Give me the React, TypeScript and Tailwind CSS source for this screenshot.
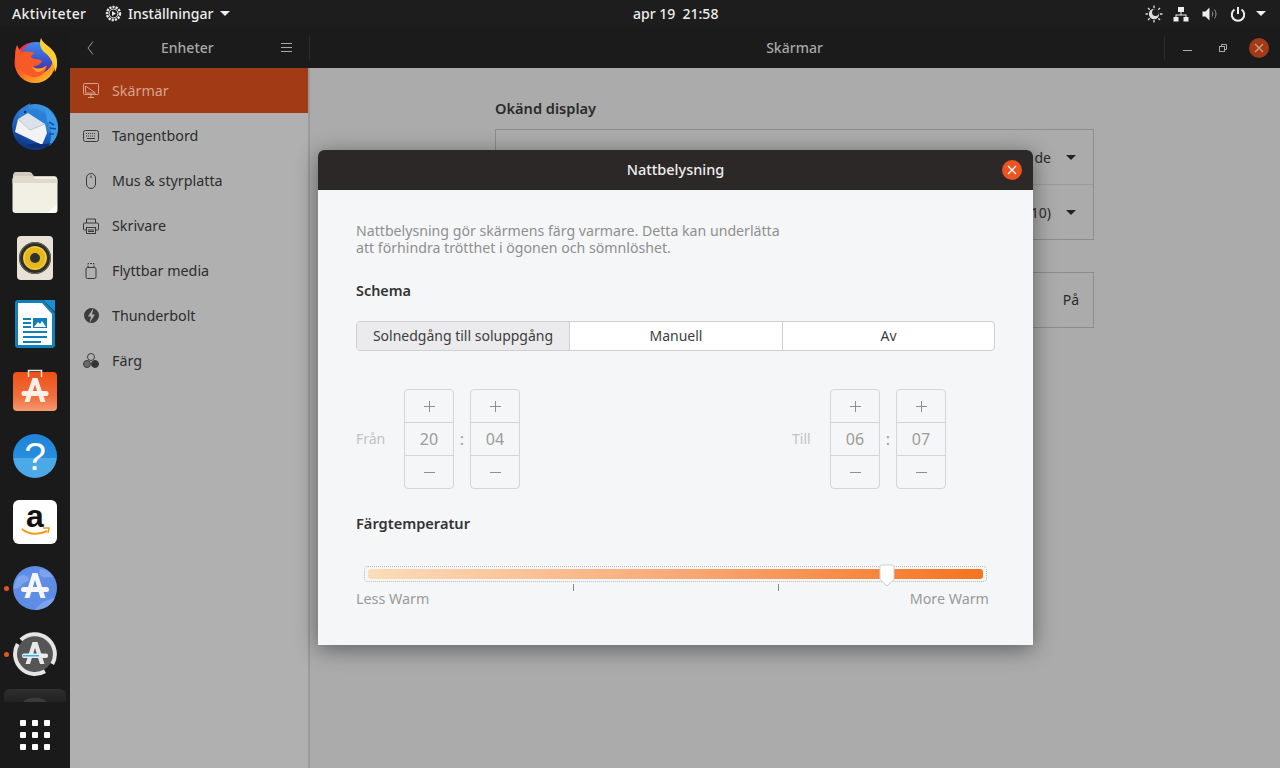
import type { ReactNode } from "react";

const FONT = "font-['Noto_Sans','Open_Sans',sans-serif]";

function Firefox() {
  return (
    <svg width="44" height="45" viewBox="0 0 44 45">
      <defs>
        <linearGradient id="ffOuter" x1="0.1" y1="0.1" x2="0.7" y2="1">
          <stop offset="0" stopColor="#f0264f" />
          <stop offset="0.55" stopColor="#ff6a1f" />
          <stop offset="1" stopColor="#ffb52a" />
        </linearGradient>
        <linearGradient id="ffBlue" x1="0.5" y1="0" x2="0.5" y2="1">
          <stop offset="0" stopColor="#3f8df0" />
          <stop offset="0.6" stopColor="#3a4fc8" />
          <stop offset="1" stopColor="#4a2aa0" />
        </linearGradient>
      </defs>
      <circle cx="22" cy="24.500" r="20.500" fill="url(#ffOuter)" />
      <circle cx="24" cy="20" r="16" fill="url(#ffBlue)" />
      <path d="M28 0C30 6 37 8 41 14C45 20 45 29 42 34C41 25 37 18 31 14C27 10 26 5 28 0Z" fill="#ffcf2e" />
      <path d="M4 7L8 15C11 13 17 13 22 15C20 16 18 17 18 19C20 22 25 20 29 23C27 27 24 28 20 28C24 32 30 31 34 27C33 35 27 40 20 39C10 37 3 29 2 21C2 16 2 11 4 7Z" fill="#f75a26" />
      <path d="M19 28.500C23 32 29 31 33 28C32 32 28 34 24 34C22 33 20 31 19 28.500Z" fill="#ffa62a" />
    </svg>
  );
}

function Thunderbird() {
  return (
    <svg width="48" height="48" viewBox="0 0 48 48">
      <defs>
        <linearGradient id="tbBlue" x1="0.7" y1="0" x2="0.3" y2="1">
          <stop offset="0" stopColor="#3d9be6" />
          <stop offset="0.6" stopColor="#1a5fbe" />
          <stop offset="1" stopColor="#0d2f78" />
        </linearGradient>
      </defs>
      <circle cx="24" cy="25" r="23" fill="url(#tbBlue)" />
      <path d="M8 15C9 8 14 3 20 1C17 4 17 6 18 8C25 6 33 9 37 15C41 20 42 26 38 32L33 22Z" fill="#2a7fd6" />
      <path d="M34 6C42 10 47 18 47 27C47 34 43 40 38 44C41 36 41 27 36 19Z" fill="#3d9be6" />
      <path d="M38 20l5 3M39 26l6 1M38 32l5 0" stroke="#144f9f" strokeWidth="1.500" />
      <path d="M7 17L17 11L34 22L19 29Z" fill="#dde1ea" />
      <path d="M7 17L19 28L34 22L36 31L31 43L4 30Z" fill="#f3f3f5" />
      <path d="M7 17L19 28L34 22" fill="none" stroke="#b9bec9" strokeWidth="0.800" />
      <circle cx="14" cy="10" r="1.200" fill="#0c2a5c" />
      <path d="M14 43C24 48 34 47 41 41C35 42 30 43 27 41Z" fill="#0d2f78" />
    </svg>
  );
}

function Folder() {
  return (
    <svg width="46" height="42" viewBox="0 0 46 42">
      <path d="M1 5c0-2 1-4 3-4h13c2 0 3 1 4 3l1 1h20c2 0 3 1 3 3v8H1z" fill="#d1cbbd" />
      <rect x="0.500" y="6" width="45" height="36" rx="3" fill="#f2efe4" />
      <path d="M0.500 9c0-3 1-4 3-4h17l3 3h19c2 0 3 1 3 3v1H0.500z" fill="#dfdacb" />
      <path d="M45 33v6c0 2-1 3-3 3h-7z" fill="#fbfaf5" />
    </svg>
  );
}

function Rhythmbox() {
  return (
    <svg width="36" height="44" viewBox="0 0 36 44">
      <rect x="0" y="0" width="36" height="44" rx="4" fill="#e7e2d5" />
      <circle cx="18" cy="22" r="16" fill="#2f2e2c" />
      <circle cx="18" cy="22" r="15.500" fill="none" stroke="#6e6c68" strokeWidth="1" />
      <circle cx="18" cy="22" r="12" fill="#e6b81f" />
      <circle cx="18" cy="22" r="11" fill="none" stroke="#f4d345" strokeWidth="1" />
      <circle cx="18" cy="22" r="5" fill="#33312d" />
    </svg>
  );
}

function Writer() {
  return (
    <svg width="40" height="48" viewBox="0 0 40 48">
      <path d="M3 0h25l12 13v32c0 2-1 3-3 3H3c-2 0-3-1-3-3V3c0-2 1-3 3-3z" fill="#1180b8" />
      <path d="M3 3h24l10 11v31H3z" fill="#fff" />
      <path d="M28 0h12v12z" fill="#1b8fd0" />
      <path d="M8 18h8v2H8zM8 22h8v2H8zM8 26h8v2H8zM8 31h24v2H8zM8 36h24v2H8zM8 41h18v2H8z" fill="#1180b8" />
      <rect x="18" y="18" width="14" height="10" fill="#1180b8" />
      <path d="M19 27l4-5 2 2 2-3 4 6z" fill="#fff" />
    </svg>
  );
}

function Software() {
  return (
    <svg width="44" height="42" viewBox="0 0 44 42">
      <defs>
        <linearGradient id="swBg" x1="0" y1="0" x2="0" y2="1">
          <stop offset="0" stopColor="#ee5017" />
          <stop offset="0.65" stopColor="#f0703f" />
          <stop offset="1" stopColor="#f59a72" />
        </linearGradient>
      </defs>
      <rect x="0" y="3" width="44" height="39" rx="4" fill="url(#swBg)" />
      <path d="M15.500 8V1.500h13V8" fill="none" stroke="#f3e6dc" strokeWidth="1.500" />
      <path d="M11.500 33L19.500 9h5L32.500 33h-5L22 15.500 16.500 33z" fill="#fdf0ea" />
      <rect x="8.500" y="22" width="27" height="5" rx="2.500" fill="#fdf0ea" />
    </svg>
  );
}

function Help() {
  return (
    <div className="flex h-11 w-11 items-center justify-center rounded-full bg-[linear-gradient(#1f84d9_0%,#2a8ede_55%,#4aa9e6_55%,#4aa9e6_100%)] font-['Liberation_Sans',sans-serif] text-[39px] leading-none text-white">
      ?
    </div>
  );
}

function Amazon() {
  return (
    <div className="relative flex h-11 w-11 justify-center rounded-md bg-white font-['Liberation_Sans',sans-serif] text-[32px] leading-[33px] font-bold text-[#111]">
      a
      <svg className="absolute top-[27px] left-[8px]" width="29" height="11" viewBox="0 0 29 11">
        <path d="M1 2c7 6 17 6 25 2" fill="none" stroke="#f59a1c" strokeWidth="2" />
        <path d="M22 1l6 0-1 5" fill="none" stroke="#f59a1c" strokeWidth="1.500" />
      </svg>
    </div>
  );
}

function Updater() {
  return (
    <svg width="44" height="44" viewBox="0 0 44 44">
      <circle cx="22" cy="22" r="22" fill="#5f8de6" />
      <path d="M6 10c5-2 10 0 10 3s-6 3-8 7c-2 2-5 3-7 3 0-5 2-10 5-13zM27 3c5 0 10 3 13 8-3 1-6-1-8 1-3 0-7-4-5-9zM22 44c4-6 10-10 20-12-3 7-11 12-20 12z" fill="#7ba3ee" />
      <path d="M11.500 32L19.500 7h5L32.500 32h-5L22 14 16.500 32z" fill="#f5f6fb" />
      <rect x="8" y="21" width="28" height="5" rx="2.500" fill="#f5f6fb" />
    </svg>
  );
}

function UpdaterRing() {
  return (
    <svg width="44" height="44" viewBox="0 0 44 44">
      <circle cx="22" cy="22" r="18" fill="#555" />
      <path d="M7.900 7.900A20 20 0 0 1 39.300 32" fill="none" stroke="#e5e5e5" strokeWidth="4" />
      <path d="M32 39.300A20 20 0 0 1 4.700 12" fill="none" stroke="#e5e5e5" strokeWidth="4" />
      <path d="M12.500 32L19.500 10h5L31.500 32h-4.500L22 16 17 32z" fill="#e8e8e8" />
      <rect x="9" y="21.500" width="26" height="4.500" rx="2" fill="#ececec" />
      <rect x="10" y="23" width="16" height="1.500" fill="#27b7ea" />
    </svg>
  );
}

function DockItem({ children, running }: { children: ReactNode; running?: boolean }) {
  return (
    <div className="relative flex h-[66px] w-[70px] shrink-0 items-center justify-center">
      {running && <span className="absolute top-[31px] left-[4px] h-[5px] w-[5px] rounded-full bg-[#e95420]" />}
      {children}
    </div>
  );
}

function Dock() {
  return (
    <aside className="flex w-[70px] shrink-0 flex-col bg-[#1a1a1a]">
      <div className="flex h-[675px] flex-col overflow-hidden">
        <DockItem><Firefox /></DockItem>
        <DockItem><Thunderbird /></DockItem>
        <DockItem><Folder /></DockItem>
        <DockItem><Rhythmbox /></DockItem>
        <DockItem><Writer /></DockItem>
        <DockItem><Software /></DockItem>
        <DockItem><Help /></DockItem>
        <DockItem><Amazon /></DockItem>
        <DockItem running><Updater /></DockItem>
        <DockItem running><UpdaterRing /></DockItem>
        <div className="mx-1 mt-[2px] flex h-[13px] shrink-0 justify-center overflow-hidden rounded-t-md bg-[linear-gradient(#2f2f2f,#222222)]">
          <span className="mt-[9px] h-[24px] w-[30px] shrink-0 rounded-full bg-[#3a3a3a]" />
        </div>
      </div>
      <div className="mt-[18px] grid w-[30px] grid-cols-3 gap-[6px] self-center">
        {Array.from({ length: 9 }).map((_, i) => (
          <span key={i} className="h-[6px] w-[6px] rounded-[1px] bg-white" />
        ))}
      </div>
    </aside>
  );
}

function TopBar() {
  return (
    <header className="relative flex h-[27px] shrink-0 items-center bg-[#1d1d1d] text-[14px] font-medium text-[#eeeeee]">
      <span className="ml-3 w-[74px] tracking-[0.4px] whitespace-nowrap">Aktiviteter</span>
      <svg className="ml-[19px]" width="17" height="17" viewBox="0 0 17 17">
        <circle cx="8.500" cy="8.500" r="6.500" fill="none" stroke="#e8e8e8" strokeWidth="2.400" strokeDasharray="2.200 1" />
        <circle cx="8.500" cy="8.500" r="4.400" fill="#1d1d1d" stroke="#e8e8e8" strokeWidth="1" />
        <path d="M7 6l4 2.500L7 11z" fill="#e8e8e8" />
      </svg>
      <span className="ml-[6px] w-[86px] whitespace-nowrap">Inställningar</span>
      <span className="ml-[6px] h-0 w-0 border-x-[5px] border-t-[5px] border-x-transparent border-t-[#eeeeee]" />
      <span className="absolute left-[633px] whitespace-pre">apr 19  21:58</span>
      <div className="ml-auto flex items-center pr-[14px]">
        <svg width="18" height="18" viewBox="0 0 18 18" stroke="#ddd" strokeWidth="1.300" fill="none">
          <circle cx="9" cy="9" r="4.500" fill="#ddd" />
          <path d="M9 0.500v2.500M9 15v2.500M0.500 9H3M15 9h2.500M3 3l1.700 1.700M13.300 13.300L15 15M15 3l-1.700 1.700M4.700 13.300L3 15" />
          <circle cx="10.500" cy="7.500" r="3.400" fill="#1d1d1d" stroke="none" />
        </svg>
        <svg className="ml-[10px]" width="16" height="16" viewBox="0 0 16 16" fill="#eee">
          <rect x="5" y="1" width="6" height="5" />
          <rect x="0.500" y="11" width="5" height="4.500" />
          <rect x="10.500" y="11" width="5" height="4.500" />
          <path d="M7.500 6h1v2.500h5V11h-1V9.500H3.500V11h-1V8.500h5z" />
        </svg>
        <svg className="ml-[13px]" width="16" height="16" viewBox="0 0 16 16">
          <path d="M0.500 5.500h3l4-4v13l-4-4h-3z" fill="#eee" />
          <path d="M10 5.500c1 1.500 1 3.500 0 5M12.500 3.500c2 2.500 2 6.500 0 9" fill="none" stroke="#999" strokeWidth="1" />
        </svg>
        <svg className="ml-[12px]" width="16" height="16" viewBox="0 0 16 16" fill="none" stroke="#eee" strokeWidth="2">
          <path d="M4.500 3.500a6.200 6.200 0 1 0 7 0" />
          <path d="M8 1v7" />
        </svg>
        <span className="ml-[10px] h-0 w-0 border-x-[5px] border-t-[5px] border-x-transparent border-t-[#eeeeee]" />
      </div>
    </header>
  );
}

const ic = { fill: "none", stroke: "#3a3a3a", strokeWidth: 1 };

const sidebarItems: { label: string; icon: ReactNode }[] = [
  {
    label: "Skärmar",
    icon: (
      <svg width="16" height="16" viewBox="0 0 16 16" fill="none" stroke="#d9a28d" strokeWidth="1">
        <rect x="0.500" y="0.500" width="15" height="11" rx="1" />
        <path d="M2.500 3l10 7M2.500 3v7h10M5 14.500h6M8 11.500v3" />
      </svg>
    ),
  },
  {
    label: "Tangentbord",
    icon: (
      <svg width="16" height="12" viewBox="0 0 16 12" {...ic}>
        <rect x="0.500" y="0.500" width="15" height="11" rx="2" />
        <path d="M3 3.500h10M3 6h10" strokeDasharray="1 1" />
        <path d="M4 8.500h8" />
      </svg>
    ),
  },
  {
    label: "Mus & styrplatta",
    icon: (
      <svg width="12" height="16" viewBox="0 0 12 16" {...ic}>
        <rect x="1.500" y="0.500" width="9" height="15" rx="4.500" />
        <path d="M6 2.500v2.500" />
      </svg>
    ),
  },
  {
    label: "Skrivare",
    icon: (
      <svg width="16" height="16" viewBox="0 0 16 16" {...ic}>
        <path d="M3.500 5V1h9v4M3.500 12h-2a1 1 0 0 1-1-1V6a1 1 0 0 1 1-1h13a1 1 0 0 1 1 1v5a1 1 0 0 1-1 1h-2" />
        <rect x="3.500" y="9.500" width="9" height="6" />
        <path d="M5 12h6M5 13.500h6" />
      </svg>
    ),
  },
  {
    label: "Flyttbar media",
    icon: (
      <svg width="12" height="16" viewBox="0 0 12 16" {...ic}>
        <path d="M3 4.500V0.500h6v4" strokeDasharray="2 1" />
        <rect x="1" y="4.500" width="10" height="11" rx="1.500" />
      </svg>
    ),
  },
  {
    label: "Thunderbolt",
    icon: (
      <svg width="15" height="15" viewBox="0 0 15 15">
        <path fillRule="evenodd" d="M7.500 0a7.500 7.500 0 1 1 0 15 7.500 7.500 0 0 1 0-15zM9.500 0L4 8.500h3L5.500 15l5.500-8.500H8z" fill="#3d3d3d" />
      </svg>
    ),
  },
  {
    label: "Färg",
    icon: (
      <svg width="16" height="15" viewBox="0 0 16 15" stroke="#3d3d3d" strokeWidth="1">
        <circle cx="8" cy="4" r="3.500" fill="none" />
        <circle cx="4" cy="11" r="3.500" fill="#6a6a6a" />
        <circle cx="12" cy="11" r="3.500" fill="#333" />
      </svg>
    ),
  },
];

function Sidebar() {
  return (
    <nav className="flex w-[238px] shrink-0 flex-col bg-[#b0b0b0] text-[14.3px] text-[#2d2d2d]">
      {sidebarItems.map((item, i) => (
        <div
          key={item.label}
          className={`flex h-[45px] items-center ${i === 0 ? "bg-[#a13a15] text-[#d9a28d]" : ""}`}
        >
          <span className="flex w-[42px] shrink-0 justify-center">{item.icon}</span>
          {item.label}
        </div>
      ))}
    </nav>
  );
}

function SettingsWindow() {
  return (
    <div className="flex min-w-0 flex-1 flex-col">
      <div className="flex h-[41px] shrink-0 items-center bg-[#1b1b1b] text-[14px] font-medium text-[#a8a8a8]">
        <div className="flex w-[239px] shrink-0 items-center">
          <svg className="ml-[17px]" width="7" height="14" viewBox="0 0 7 14" fill="none" stroke="#9a9a9a">
            <path d="M6 0.500L1 7l5 6.500" />
          </svg>
          <span className="ml-[67px] w-[57px] whitespace-nowrap">Enheter</span>
          <svg className="ml-[63px]" width="11" height="9" viewBox="0 0 11 9" stroke="#a8a8a8">
            <path d="M0 0.500h11M0 4.500h11M0 8.500h11" />
          </svg>
        </div>
        <span className="h-[24px] w-px bg-[#2c2c2c]" />
        <div className="flex flex-1 justify-center pl-[115px]">Skärmar</div>
        <span className="h-[24px] w-px bg-[#2c2c2c]" />
        <div className="flex w-[115px] items-center">
          <span className="ml-[18px] h-px w-[9px] translate-y-[3px] bg-[#a8a8a8]" />
          <svg className="ml-[27px]" width="8" height="8" viewBox="0 0 8 8" fill="none" stroke="#a8a8a8">
            <rect x="0.500" y="2.500" width="5" height="5" />
            <path d="M2.500 2.500V0.500h5v5h-2" />
          </svg>
          <span className="ml-[22px] flex h-5 w-5 items-center justify-center rounded-full bg-[#a13a15]">
            <svg width="10" height="10" viewBox="0 0 10 10" stroke="#c9a193" strokeWidth="1.200">
              <path d="M1 1l8 8M9 1l-8 8" />
            </svg>
          </span>
        </div>
      </div>
      <div className="flex min-h-0 flex-1">
        <Sidebar />
        <div className="w-[2px] shrink-0 bg-[#9a9a9a]" />
        <main className="flex-1 bg-[#ababab] pt-[31px] pl-[185px] text-[14px] text-[#2a2a2a]">
          <h2 className="h-[19px] text-[14.6px] leading-[19px] font-semibold">Okänd display</h2>
          <div className="mt-[11px] w-[599px] border border-[#8c8c8c]">
            <div className="flex h-[55px] items-center justify-end border-b border-[#9a9a9a] pr-[17px]">
              de
              <span className="ml-[15px] h-0 w-0 border-x-[5px] border-t-[5px] border-x-transparent border-t-[#222]" />
            </div>
            <div className="flex h-[54px] items-center justify-end pr-[17px]">
              10)
              <span className="ml-[15px] h-0 w-0 border-x-[5px] border-t-[5px] border-x-transparent border-t-[#222]" />
            </div>
          </div>
          <div className="mt-[32px] flex h-[56px] w-[599px] items-center justify-end border border-[#8c8c8c] pr-[14px] pb-[2px]">
            På
          </div>
        </main>
      </div>
    </div>
  );
}

function Spinner({ value }: { value: string }) {
  return (
    <div className="flex h-[100px] w-[50px] flex-col rounded-[4px] border border-[#d3d5d8] text-[#9c9c9c]">
      <div className="flex h-[33px] items-center justify-center border-b border-[#d3d5d8]">
        <svg width="11" height="11" viewBox="0 0 11 11" stroke="#8f8f8f">
          <path d="M5.500 0v11M0 5.500h11" />
        </svg>
      </div>
      <div className="flex h-[33px] items-center justify-center border-b border-[#d3d5d8] text-[16px]">{value}</div>
      <div className="flex flex-1 items-center justify-center">
        <span className="h-px w-[11px] bg-[#8f8f8f]" />
      </div>
    </div>
  );
}

function TimeGroup({ label, labelWidth, hours, minutes }: { label: string; labelWidth: string; hours: string; minutes: string }) {
  return (
    <div className="flex items-center">
      <span className={`${labelWidth} pb-[2px] text-[14px] text-[#c2c2c2]`}>{label}</span>
      <Spinner value={hours} />
      <span className="w-4 text-center text-[#a0a0a0]">:</span>
      <Spinner value={minutes} />
    </div>
  );
}

function NightLightDialog() {
  return (
    <div className="absolute top-[150px] left-[318px] flex h-[495px] w-[715px] flex-col overflow-hidden rounded-t-[6px] bg-[#f5f6f7] shadow-[0_4px_22px_rgba(0,0,0,0.45)]">
      <div className="relative flex h-[40px] shrink-0 items-center justify-center bg-[#2c2828] pb-[1px] text-[14.5px] font-medium text-[#eeeeee]">
        Nattbelysning
        <span className="absolute top-[10px] right-[11px] flex h-5 w-5 items-center justify-center rounded-full bg-[#e95420]">
          <svg width="10" height="10" viewBox="0 0 10 10" stroke="#fff" strokeWidth="1.300">
            <path d="M1 1l8 8M9 1l-8 8" />
          </svg>
        </span>
      </div>
      <div className="flex flex-1 flex-col px-[38px] pt-[32px]">
        <p className="text-[14.15px] leading-[17px] text-[#8f8f8f]">
          Nattbelysning gör skärmens färg varmare. Detta kan underlätta
          <br />
          att förhindra trötthet i ögonen och sömnlöshet.
        </p>
        <h3 className="mt-[25px] text-[14.4px] leading-[19px] font-semibold text-[#333]">Schema</h3>
        <div className="mt-[21px] grid h-[30px] w-[639px] grid-cols-[213px_213px_1fr] overflow-hidden rounded-[4px] border border-[#cfcfcf] bg-white pb-0 text-[14px] text-[#3d3d3d]">
          <div className="flex items-center justify-center border-r border-[#cfcfcf] bg-[#ebebed] pb-[2px]">Solnedgång till soluppgång</div>
          <div className="flex items-center justify-center border-r border-[#cfcfcf] pb-[2px]">Manuell</div>
          <div className="flex items-center justify-center pb-[2px]">Av</div>
        </div>
        <div className="mt-[38px] flex w-[590px] justify-between">
          <TimeGroup label="Från" labelWidth="w-[48px]" hours="20" minutes="04" />
          <TimeGroup label="Till" labelWidth="w-[38px]" hours="06" minutes="07" />
        </div>
        <h3 className="mt-[25px] text-[14.6px] leading-[19px] font-semibold text-[#333]">Färgtemperatur</h3>
        <div className="relative mt-[33px] ml-[8px] h-[16px] w-[623px] rounded-[4px] border border-dotted border-[#b8b8b8] px-[3px] py-[2px]">
          <div className="h-[10px] rounded-[3px] bg-[linear-gradient(90deg,#fcdcba,#f9a976_50%,#f47421)]" />
          <svg className="absolute top-[-3px] left-[514px]" width="16" height="23" viewBox="0 0 16 23">
            <path d="M2.500 1h11a1.500 1.500 0 0 1 1.500 1.500v13L8 22l-7-6.500v-13A1.500 1.500 0 0 1 2.500 1z" fill="#fff" stroke="#cfcfcf" />
          </svg>
        </div>
        <div className="relative mt-[2px] h-[7px]">
          <span className="absolute left-[217px] h-[7px] w-px bg-[#8a8a8a]" />
          <span className="absolute left-[422px] h-[7px] w-px bg-[#8a8a8a]" />
        </div>
        <div className="flex w-[633px] justify-between text-[14.3px] leading-[16px] text-[#9a9a9a]">
          <span>Less Warm</span>
          <span>More Warm</span>
        </div>
      </div>
    </div>
  );
}

export default function App() {
  return (
    <div className={`relative flex h-[768px] w-[1280px] flex-col overflow-hidden ${FONT}`}>
      <TopBar />
      <div className="flex min-h-0 flex-1">
        <Dock />
        <SettingsWindow />
      </div>
      <NightLightDialog />
    </div>
  );
}
